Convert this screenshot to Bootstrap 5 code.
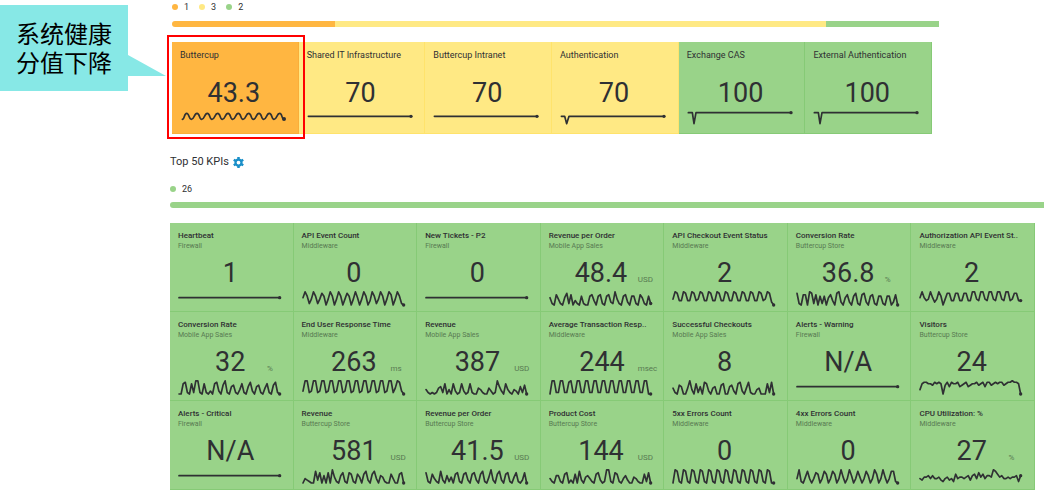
<!DOCTYPE html>
<html lang="zh-CN">
<head>
<meta charset="utf-8">
<meta name="viewport" content="width=device-width, initial-scale=1">
<title>Service health</title>
<link href="https://cdn.jsdelivr.net/npm/bootstrap@5.3.0/dist/css/bootstrap.min.css" rel="stylesheet">
<style>
  :root { --ink: #2f3033; --warn: #ffb641; --mid: #ffe984; --ok: #99d389; }
  body { font-family: Roboto, "Noto Sans CJK SC", sans-serif; font-size: 9px; line-height: 12px; color: var(--ink); background: #fff; overflow-x: hidden; }
  .board { margin-left: 170px; }
  .services { padding-left: 2px; width: 88%; }
  .legend-row { gap: 10px; height: 14px; }
  .legend-row span { display: flex; align-items: center; gap: 6px; }
  .legend-row i { width: 6px; height: 6px; border-radius: 50%; }
  .split { height: 6px; border-radius: 3px 0 0 3px; background: none; }
  .services .split { margin-top: 7px; }
  .is-warn { background: var(--warn); --line: #f9ae3a; }
  .is-mid { background: var(--mid); --line: #ffe36c; }
  .is-ok { background: var(--ok); --line: #86ca76; }
  .tiles { display: grid; }
  .tiles-6 { grid-template-columns: repeat(6, 1fr); margin: 15px 7px 0 0; }
  .tiles-7 { grid-template-columns: repeat(7, 1fr); margin: 15px 9px 0 0; }
  .tile { position: relative; min-width: 0; padding: 7px 8px 0; border-right: 1px solid var(--line); border-bottom: 1px solid var(--line); }
  .tiles-6 .tile { height: 92px; }
  .tiles-7 .tile { height: 89px; }
  .tile h3 { font-size: 9px; line-height: 12px; margin: 0; font-weight: 400; white-space: nowrap; }
  .tiles-7 h3 { font-weight: 500; font-size: 8px; }
  .tile small { display: block; font-size: 7px; line-height: 9px; color: #587a52; }
  .reading { display: grid; grid-template-columns: 89px 1fr; align-items: end; line-height: 32px; padding-top: 6px; }
  .reading b { grid-area: 1 / 1 / 2 / 3; text-align: center; font-weight: 400; font-size: 27px; padding-right: 2px; }
  .reading em { grid-area: 1 / 2; font-style: normal; font-size: 8px; line-height: 18px; color: #587a52; }
  .tiles-6 .reading { padding-top: 16px; }
  .spark { display: block; margin-top: 1px; fill: none; stroke: var(--ink); stroke-width: 5; stroke-linejoin: round; stroke-linecap: round; }
  .spark circle { fill: var(--ink); stroke: none; }
  .focus-box { position: absolute; inset: -7px -7px -6px -5px; border: 2px solid #f00; z-index: 2; }
  .kpi-head { font-size: 11px; line-height: 16px; margin: 20px 0 0; font-weight: 400; }
  .gear { border: 0; padding: 0; background: none; line-height: 0; color: #1a8fc8; }
  .kpi-legend { margin: 12px 0 6px; }
  .callout { position: absolute; left: 0; top: 5px; width: 128px; padding: 13px 0 15px; background: #87e8e6; color: #000; font: 24px/29px "Noto Sans CJK SC", sans-serif; text-align: center; }
  .callout svg { position: absolute; left: 100%; top: 50px; }
  .callout div { height: 29px; }
</style>
</head>
<body>
<aside class="callout"><div>系统健康</div><div>分值下降</div>
  <svg width="38" height="21" viewBox="0 0 38 21" aria-hidden="true"><path d="M0 0L38 21H0Z" fill="#87e8e6"/></svg>
</aside>
<main class="board">
  <section class="services">
    <div class="legend-row d-flex"><span><i class="is-warn"></i>1</span><span><i class="is-mid"></i>3</span><span><i class="is-ok"></i>2</span></div>
    <div class="progress split">
      <div class="is-warn" style="width:21.3%"></div><div class="is-mid" style="width:64%"></div><div class="is-ok" style="width:14.7%"></div>
    </div>
    <div class="tiles tiles-6">
      <article class="tile is-warn"><h3>Buttercup</h3><div class="reading"><b>43.3</b></div>
        <svg class="spark" width="108" height="16" viewBox="0 0 324 48"><path d="M7 28c7 0 5-18 13-18s6 18 14 18c9 0 8-18 17-18s6 18 14 18c9 0 8-18 17-18s6 18 14 18c9 0 8-18 17-18s6 18 14 18c9 0 8-18 17-18s6 18 14 18c9 0 8-18 17-18s6 18 14 18c9 0 8-18 17-18s6 18 14 18c9 0 8-18 17-18s6 18 14 18c9 0 8-18 17-18s6 18 14 18c9 0 8-18 17-18s4 16 12 17"/><circle cx="312" cy="27" r="6"/></svg>
        <div class="focus-box"></div></article>
      <article class="tile is-mid"><h3>Shared IT Infrastructure</h3><div class="reading"><b>70</b></div>
        <svg class="spark" width="108" height="16" viewBox="0 0 324 48"><path d="M4 19H312"/><circle cx="312" cy="19" r="5"/></svg></article>
      <article class="tile is-mid"><h3>Buttercup Intranet</h3><div class="reading"><b>70</b></div>
        <svg class="spark" width="108" height="16" viewBox="0 0 324 48"><path d="M4 19H312"/><circle cx="312" cy="19" r="5"/></svg></article>
      <article class="tile is-mid"><h3>Authentication</h3><div class="reading"><b>70</b></div>
        <svg class="spark" width="108" height="16" viewBox="0 0 324 48"><path d="M4 19H14L20 41L27 19H312"/><circle cx="312" cy="19" r="5"/></svg></article>
      <article class="tile is-ok"><h3>Exchange CAS</h3><div class="reading"><b>100</b></div>
        <svg class="spark" width="108" height="16" viewBox="0 0 324 48"><path d="M4 8H16L21 41L27 8H312"/><circle cx="312" cy="8" r="5"/></svg></article>
      <article class="tile is-ok"><h3>External Authentication</h3><div class="reading"><b>100</b></div>
        <svg class="spark" width="108" height="16" viewBox="0 0 324 48"><path d="M4 8H16L21 41L27 8H312"/><circle cx="312" cy="8" r="5"/></svg></article>
    </div>
  </section>

  <section>
    <h2 class="kpi-head d-flex align-items-center gap-1">Top 50 KPIs
      <button class="gear" type="button" aria-label="Settings"><svg width="11" height="11" viewBox="0 0 22 22"><g stroke="currentColor" stroke-width="5"><path d="M11 0V5M11 17V22M1.500 5.500L5.800 8M16.200 14L20.500 16.500M1.500 16.500L5.800 14M16.200 8L20.500 5.500"/></g><circle cx="11" cy="11" r="6" fill="none" stroke="currentColor" stroke-width="4.500"/></svg></button></h2>
    <div class="legend-row kpi-legend d-flex"><span><i class="is-ok"></i>26</span></div>
    <div class="progress split"><div class="is-ok" style="width:100%"></div></div>
    <div class="tiles tiles-7">
      <article class="tile is-ok"><h3>Heartbeat</h3><small>Firewall</small><div class="reading"><b>1</b></div><svg class="spark" data-trend="55"></svg></article>
      <article class="tile is-ok"><h3>API Event Count</h3><small>Middleware</small><div class="reading"><b>0</b></div><svg class="spark" data-trend="5961496148604960496048604950496039614960497049610"></svg></article>
      <article class="tile is-ok"><h3>New Tickets - P2</h3><small>Firewall</small><div class="reading"><b>0</b></div><svg class="spark" data-trend="55"></svg></article>
      <article class="tile is-ok"><h3>Revenue per Order</h3><small>Mobile App Sales</small><div class="reading"><b>48.4</b><em>USD</em></div><svg class="spark" data-trend="5107410581703106100673067106721941067206610751061"></svg></article>
      <article class="tile is-ok"><h3>API Checkout Event Status</h3><small>Middleware</small><div class="reading"><b>2</b></div><svg class="spark" data-trend="4983398339834983398339833983398339833983398349820"></svg></article>
      <article class="tile is-ok"><h3>Conversion Rate</h3><small>Buttercup Store</small><div class="reading"><b>36.8</b><em>%</em></div><svg class="spark" data-trend="8107709817061605730892057206810782067106610660270"></svg></article>
      <article class="tile is-ok"><h3>Authorization API Event St..</h3><small>Middleware</small><div class="reading"><b>2</b></div><svg class="spark" data-trend="5953495249604883388338833994399439943994399348833"></svg></article>

      <article class="tile is-ok"><h3>Conversion Rate</h3><small>Mobile App Sales</small><div class="reading"><b>32</b><em>%</em></div><svg class="spark" data-trend="0078107199107102078206910561037105820561047106810"></svg></article>
      <article class="tile is-ok"><h3>End User Response Time</h3><small>Middleware</small><div class="reading"><b>263</b><em>ms</em></div><svg class="spark" data-trend="2991299129912991299129912991299129912991299149820"></svg></article>
      <article class="tile is-ok"><h3>Revenue</h3><small>Mobile App Sales</small><div class="reading"><b>387</b><em>USD</em></div><svg class="spark" data-trend="3101014517030720172017100431004201952073103205160"></svg></article>
      <article class="tile is-ok"><h3>Average Transaction Resp..</h3><small>Middleware</small><div class="reading"><b>244</b><em>msec</em></div><svg class="spark" data-trend="0991199118911991199119911991199119911991199119900"></svg></article>
      <article class="tile is-ok"><h3>Successful Checkouts</h3><small>Mobile App Sales</small><div class="reading"><b>8</b></div><svg class="spark" data-trend="4106500493071508720450067005620782048100340007180"></svg></article>
      <article class="tile is-ok"><h3>Alerts - Warning</h3><small>Firewall</small><div class="reading"><b>N/A</b></div><svg class="spark" data-trend="55"></svg></article>
      <article class="tile is-ok"><h3>Visitors</h3><small>Buttercup Store</small><div class="reading"><b>24</b></div><svg class="spark" data-trend="3788776878706858778567856778678588678788678898870"></svg></article>

      <article class="tile is-ok"><h3>Alerts - Critical</h3><small>Firewall</small><div class="reading"><b>N/A</b></div><svg class="spark" data-trend="55"></svg></article>
      <article class="tile is-ok"><h3>Revenue</h3><small>Buttercup Store</small><div class="reading"><b>581</b><em>USD</em></div><svg class="spark" data-trend="0321008270507094105710761064068206830541006300670"></svg></article>
      <article class="tile is-ok"><h3>Revenue per Order</h3><small>Buttercup Store</small><div class="reading"><b>41.5</b><em>USD</em></div><svg class="spark" data-trend="7106310820514067106720672068104920682067104710270"></svg></article>
      <article class="tile is-ok"><h3>Product Cost</h3><small>Buttercup Store</small><div class="reading"><b>144</b><em>USD</em></div><svg class="spark" data-trend="3105510670206082045310672019910761035200431006170"></svg></article>
      <article class="tile is-ok"><h3>5xx Errors Count</h3><small>Middleware</small><div class="reading"><b>0</b></div><svg class="spark" data-trend="0981098109810981098109810981098109810981098109800"></svg></article>
      <article class="tile is-ok"><h3>4xx Errors Count</h3><small>Middleware</small><div class="reading"><b>0</b></div><svg class="spark" data-trend="3910483037603860386039403950384038503960394038810"></svg></article>
      <article class="tile is-ok"><h3>CPU Utilization: %</h3><small>Middleware</small><div class="reading"><b>27</b><em>%</em></div><svg class="spark" data-trend="3244535334213423163443452563746355498645334344515"></svg></article>
    </div>
  </section>
</main>
<script src="https://cdn.jsdelivr.net/npm/bootstrap@5.3.0/dist/js/bootstrap.bundle.min.js"></script>
<script>
  // Each digit is one evenly spaced sample, 0 at the bottom and 9 at the top.
  document.querySelectorAll('[data-trend]').forEach(svg => {
    const samples = [...svg.dataset.trend].map(Number);
    const points = samples.map((v, i) => [3 + i * 302 / (samples.length - 1), 45 - v * 4.4]);
    const [x, y] = points[points.length - 1];
    svg.setAttribute('width', 104);
    svg.setAttribute('height', 18);
    svg.setAttribute('viewBox', '0 0 312 54');
    svg.innerHTML = `<polyline points="${points.join(' ')}"/><circle cx="${x}" cy="${y}" r="5"/>`;
  });
</script>
</body>
</html>
